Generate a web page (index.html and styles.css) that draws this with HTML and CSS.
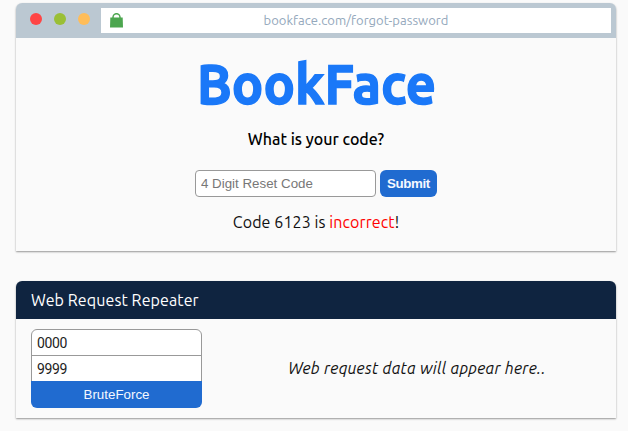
FILE: index.html
```
<!DOCTYPE html>
<html lang="en">
<head>
<meta charset="utf-8">
<title>BookFace</title>
<link rel="stylesheet" href="styles.css">
</head>
<body>
<section class="panel browser">
  <header class="browser-bar">
    <span class="dot red"></span><span class="dot green"></span><span class="dot amber"></span>
    <div class="address">
      <svg class="lock" width="13" height="15" viewBox="0 0 13 15"><path d="M3 5V4.2a3.5 3.5 0 0 1 7 0V5" fill="none" stroke="#4ca64f" stroke-width="1.5"/><path d="M.3 4.6h12.4L13 14.5H0z" fill="#4ca64f"/></svg>
      <span class="url">bookface.com/forgot-password</span>
    </div>
  </header>
  <div class="page">
    <svg class="logo" width="260" height="76" viewBox="0 0 260 76"><text x="11" y="58" textLength="239" lengthAdjust="spacingAndGlyphs">BookFace</text></svg>
    <h1 class="question">What is your code?</h1>
    <form class="reset">
      <input class="code" type="text" placeholder="4 Digit Reset Code">
      <button class="submit" type="button">Submit</button>
    </form>
    <p class="result">Code 6123 is <span class="bad">incorrect</span>!</p>
  </div>
</section>
<section class="panel repeater">
  <header class="repeater-head">Web Request Repeater</header>
  <div class="repeater-body">
    <form class="range">
      <input class="from" type="text" value="0000">
      <input class="to" type="text" value="9999">
      <button class="brute" type="button">BruteForce</button>
    </form>
    <p class="data">Web request data will appear here..</p>
  </div>
</section>
</body>
</html>
```
FILE: styles.css
```
* { box-sizing: border-box; }
body {
  margin: 0;
  padding: 3px 12px 0 16px;
  height: 431px;
  overflow: hidden;
  background: #fafafa;
  color: #111;
  font: 16px/22px Ubuntu, "Noto Sans", sans-serif;
}
.panel {
  width: 600px;
  background: #fafafa;
  border-radius: 6px 6px 0 0;
  box-shadow: 0 1px 2px rgba(0, 0, 0, .4);
}
.browser { height: 248px; margin-bottom: 30px; }
.browser-bar {
  display: flex;
  align-items: center;
  height: 35px;
  padding: 0 5px 0 14px;
  background: #bbc8d2;
  border-radius: 6px 6px 0 0;
}
.dot { width: 12px; height: 12px; margin: -3px 12px 0 0; border-radius: 50%; }
.red { background: #ff4545; }
.green { background: #9abf35; }
.amber { background: #ffbd59; margin-right: 11px; }
.address {
  display: flex;
  align-items: center;
  flex: 1;
  height: 25px;
  padding-left: 9px;
  background: #fff;
}
.lock { flex: none; margin: -1px 0 0; }
.url {
  flex: 1;
  margin-top: -1px;
  padding-right: 22px;
  text-align: center;
  color: #93a7bb;
  font-size: 13px;
  letter-spacing: .04px;
}
.page { display: flex; flex-direction: column; align-items: center; padding-top: 8px; }
.logo { display: block; height: 76px; width: 260px; overflow: visible; }
.logo text {
  font: 700 56px Ubuntu, "Noto Sans", sans-serif;
  fill: #1a78f8;
  stroke: #1a78f8;
  stroke-width: 1.5px;
}
.question { margin: 6px 0 0; font-size: 16px; font-weight: 500; line-height: 22px; color: #000; }
.reset { display: flex; gap: 4px; margin: 20px 0 0; }
input {
  display: block;
  height: 27px;
  padding: 0 5px;
  border: 1px solid #999;
  border-radius: 4px;
  background: #fff;
  color: #222;
  font: 13.333px "Liberation Sans", Arial, sans-serif;
}
input::placeholder { color: #777; opacity: 1; }
button {
  height: 27px;
  padding: 0;
  border: 0;
  background: #206bd0;
  color: #f4f8ff;
  font: 13.333px "Liberation Sans", Arial, sans-serif;
}
.code { width: 181px; }
.submit { width: 57px; border-radius: 6px; font-weight: bold; letter-spacing: -.4px; }
.result { margin: 14px 0 0; letter-spacing: .1px; }
.bad { color: #f00; }
.repeater { height: 137px; }
.repeater-head {
  height: 38px;
  padding: 8px 15px;
  background: #0f2440;
  border-radius: 6px 6px 0 0;
  color: #fff;
  letter-spacing: .1px;
}
.repeater-body { display: flex; padding: 10px 15px 0; }
.range { width: 171px; }
.range input, .brute { width: 171px; }
.from { border-radius: 6px 6px 0 0; }
.range input { font-family: Roboto, "Liberation Sans", sans-serif; font-size: 14px; letter-spacing: -.4px; }
.range .to { margin-top: -1px; border-radius: 0; }
.brute { display: block; margin-top: -1px; border-radius: 0 0 6px 6px; }
.data {
  flex: 1;
  margin: 28px 0 0;
  padding-left: 31px;
  text-align: center;
  font-style: italic;
  letter-spacing: .28px;
}
```
